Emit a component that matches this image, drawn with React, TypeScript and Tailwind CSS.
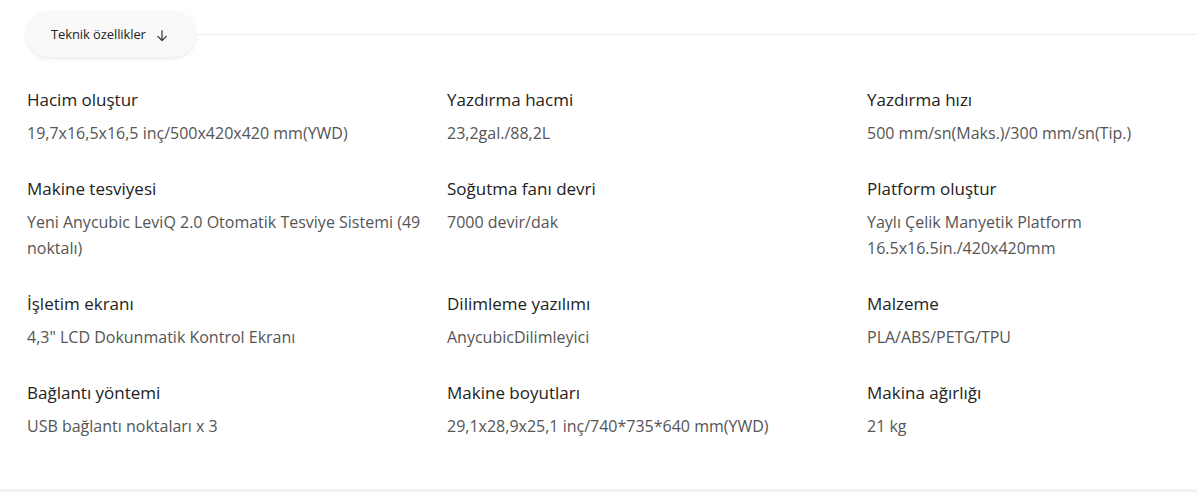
import React from "react";

const specs: [string, string][] = [
  ["Hacim oluştur", "19,7x16,5x16,5 inç/500x420x420 mm(YWD)"],
  ["Yazdırma hacmi", "23,2gal./88,2L"],
  ["Yazdırma hızı", "500 mm/sn(Maks.)/300 mm/sn(Tip.)"],
  ["Makine tesviyesi", "Yeni Anycubic LeviQ 2.0 Otomatik Tesviye Sistemi (49 noktalı)"],
  ["Soğutma fanı devri", "7000 devir/dak"],
  ["Platform oluştur", "Yaylı Çelik Manyetik Platform 16.5x16.5in./420x420mm"],
  ["İşletim ekranı", "4,3\" LCD Dokunmatik Kontrol Ekranı"],
  ["Dilimleme yazılımı", "AnycubicDilimleyici"],
  ["Malzeme", "PLA/ABS/PETG/TPU"],
  ["Bağlantı yöntemi", "USB bağlantı noktaları x 3"],
  ["Makine boyutları", "29,1x28,9x25,1 inç/740*735*640 mm(YWD)"],
  ["Makina ağırlığı", "21 kg"],
];

export default function App() {
  return (
    <div
      className="w-[1197px] h-[492px] overflow-hidden bg-white flex flex-col"
      style={{ fontFamily: '"Open Sans", sans-serif' }}
    >
      <div className="flex items-center pl-[26px] pt-[11px]">
        <div className="h-[46px] w-[170px] shrink-0 rounded-full bg-[#f9f9f9] shadow-[0_2px_4px_rgba(0,0,0,0.08)] flex items-center pl-[25px] pt-[2px] text-[13px] text-[#222]">
          <span className="tracking-[-0.1px]">Teknik özellikler</span>
          <svg className="ml-[10px]" width="12" height="13" viewBox="0 0 12 13" fill="none" stroke="#333" strokeWidth="1.2" strokeLinecap="round" strokeLinejoin="round">
            <path d="M6 1.5v10M1.8 7.3 6 11.5l4.2-4.2" />
          </svg>
        </div>
        <div className="flex-1 h-px bg-[#eeeeee]" />
      </div>
      <div className="grid grid-cols-[398px_398px_398px] gap-x-[22px] gap-y-[30px] pl-[27px] pt-[30px]">
        {specs.map(([t, v]) => (
          <div key={t}>
            <div className="text-[17px] leading-[26px] text-[#222]">{t}</div>
            <div className="mt-[7px] text-[16px] leading-[26px] text-[#555]">{v}</div>
          </div>
        ))}
      </div>
      <div className="flex-1" />
      <div className="h-[3px] bg-[#f2f2f2]" />
    </div>
  );
}
